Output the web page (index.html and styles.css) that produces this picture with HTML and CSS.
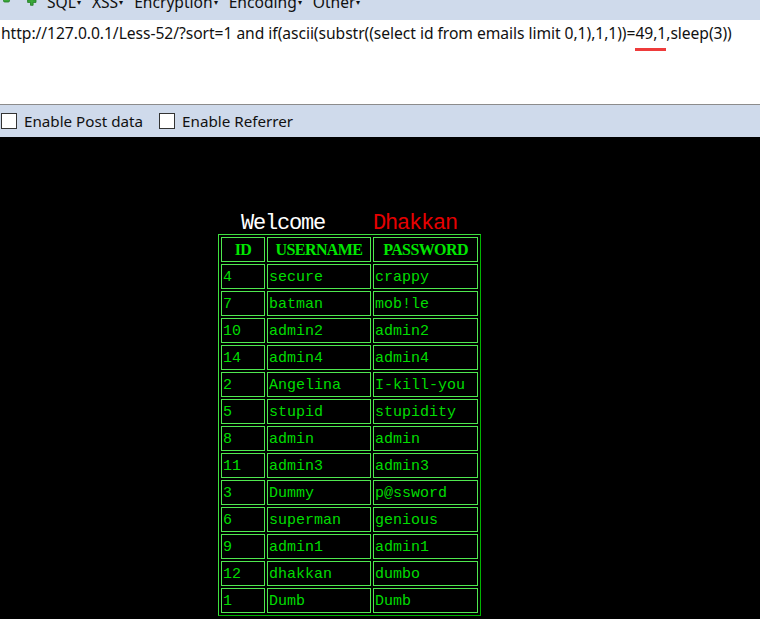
FILE: index.html
```html
<!DOCTYPE html>
<html>
<head>
<meta charset="utf-8">
<link rel="stylesheet" href="styles.css">
</head>
<body>
<div class="hackbar">
  <div class="menu">
    <svg class="ico minus" width="8" height="6" viewBox="0 0 8 6"><rect x="0.5" y="0.5" width="6" height="3.5" rx="1.2" fill="#3aa83a" stroke="#1f7a1f" stroke-width="0.8"/></svg>
    <svg class="ico plus" width="10" height="10" viewBox="0 0 10 10"><path d="M3.5 0h2.6v2.8H9v2.6H6.1V8.3H3.5V5.4H0.6V2.8h2.9z" fill="#3aa83a" stroke="#1f7a1f" stroke-width="0.8"/></svg>
    <span class="item">SQL<i>▾</i></span>
    <span class="item">XSS<i>▾</i></span>
    <span class="item">Encryption<i>▾</i></span>
    <span class="item">Encoding<i>▾</i></span>
    <span class="item">Other<i>▾</i></span>
  </div>
</div>
<div class="urlbox">
  <div class="url">http://127.0.0.1/Less-52/?sort=1 and if(ascii(substr((select id from emails limit 0,1),1,1))=<span class="mark">49,1</span>,sleep(3))</div>
</div>
<div class="optbar">
  <label class="opt"><span class="box"></span>Enable Post data</label>
  <label class="opt"><span class="box"></span>Enable Referrer</label>
</div>
<div class="page">
  <div class="content">
    <div class="welcome">Welcome    <span class="name">Dhakkan</span></div>
    <table class="users">
      <tr><th class="c1">ID</th><th class="c2">USERNAME</th><th class="c3">PASSWORD</th></tr>
      <tr><td>4</td><td>secure</td><td>crappy</td></tr>
      <tr><td>7</td><td>batman</td><td>mob!le</td></tr>
      <tr><td>10</td><td>admin2</td><td>admin2</td></tr>
      <tr><td>14</td><td>admin4</td><td>admin4</td></tr>
      <tr><td>2</td><td>Angelina</td><td>I-kill-you</td></tr>
      <tr><td>5</td><td>stupid</td><td>stupidity</td></tr>
      <tr><td>8</td><td>admin</td><td>admin</td></tr>
      <tr><td>11</td><td>admin3</td><td>admin3</td></tr>
      <tr><td>3</td><td>Dummy</td><td>p@ssword</td></tr>
      <tr><td>6</td><td>superman</td><td>genious</td></tr>
      <tr><td>9</td><td>admin1</td><td>admin1</td></tr>
      <tr><td>12</td><td>dhakkan</td><td>dumbo</td></tr>
      <tr><td>1</td><td>Dumb</td><td>Dumb</td></tr>
    </table>
  </div>
</div>
</body>
</html>
```
FILE: styles.css
```css
html, body {
  margin: 0;
  padding: 0;
  background: #000;
  height: 100%;
  overflow: hidden;
}
body {
  font-family: "Noto Sans", "Liberation Sans", sans-serif;
}
.hackbar {
  height: 20px;
  background: #cfdaeb;
  overflow: hidden;
}
.menu {
  display: flex;
  align-items: flex-start;
  margin-top: -8px;
  height: 28px;
  font-size: 15.6px;
  line-height: 20px;
  color: #111;
}
.ico {
  flex: none;
}
.minus { margin-left: 3px; margin-top: 6px; }
.plus { margin-left: 16px; margin-top: 5px; }
.item {
  white-space: nowrap;
}
.menu .item:first-of-type { margin-left: 10px; }
.item + .item { margin-left: 11px; }
.item i {
  font-style: normal;
  font-size: 8px;
  vertical-align: top;
  margin-left: 1px;
}
.urlbox {
  height: 84px;
  background: #fff;
  border-bottom: 1px solid #8c8c8c;
}
.url {
  padding: 3px 0 0 1px;
  font-size: 15.65px;
  line-height: 20px;
  color: #111;
  white-space: nowrap;
  letter-spacing: -0.05px;
}
.mark {
  position: relative;
}
.mark::after {
  content: "";
  position: absolute;
  left: 0;
  right: 0;
  bottom: -7px;
  height: 3px;
  background: #ee3b3b;
}
.optbar {
  height: 32px;
  background: #cfdaeb;
  display: flex;
  align-items: center;
  font-size: 15.2px;
  color: #111;
}
.opt {
  display: flex;
  align-items: center;
  margin-left: 1px;
}
.opt + .opt { margin-left: 16px; }
.box {
  width: 14px;
  height: 14px;
  background: #fff;
  border: 1px solid #333;
  margin-right: 7px;
}
.page {
  padding-top: 71px;
}
.content {
  margin-left: 218px;
  width: 263px;
}
.welcome {
  font-family: "Liberation Mono", monospace;
  font-size: 22px;
  letter-spacing: -1.2px;
  line-height: 26px;
  white-space: pre;
  color: #fff;
  margin-left: 23px;
  height: 26px;
  padding-top: 3px;
  box-sizing: border-box;
}
.name { color: #e60000; }
.users {
  border-collapse: separate;
  border-spacing: 2px;
  border: 1px solid;
  border-color: #3ee03e #00b400 #00b400 #3ee03e;
}
.users th, .users td {
  box-sizing: border-box;
  height: 25px;
  padding: 0 1px;
  border: 1px solid #4fe84f;
  color: #00dc00;
  vertical-align: middle;
}
.users th {
  font-family: "Liberation Serif", serif;
  font-weight: bold;
  font-size: 16px;
  letter-spacing: -0.6px;
  text-align: center;
  color: #00e600;
}
.users td {
  font-family: "Liberation Mono", monospace;
  font-size: 15px;
  text-align: left;
  padding-top: 2px;
}
.c1 { width: 44px; }
.c2 { width: 104px; }
.c3 { width: 105px; }
```
